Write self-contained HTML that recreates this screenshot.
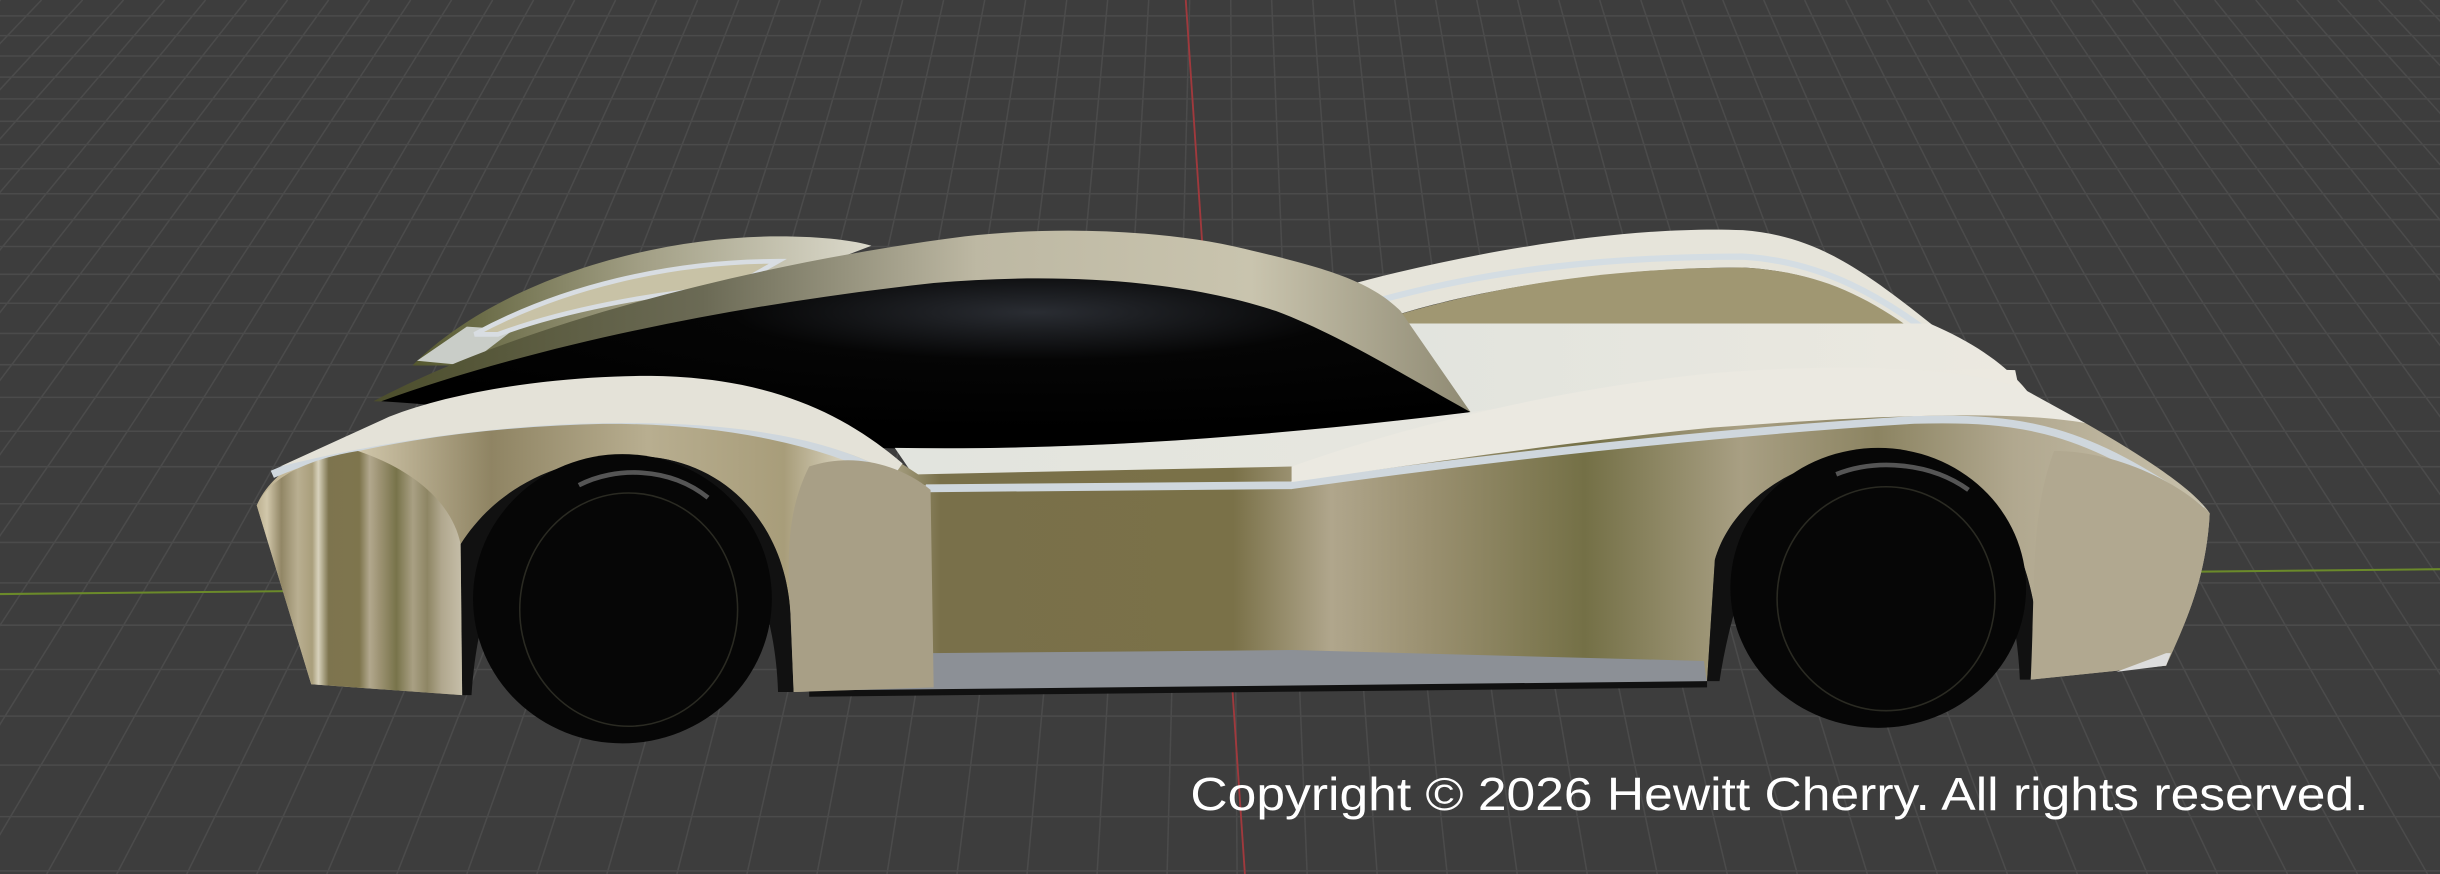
<!DOCTYPE html>
<html><head><meta charset="utf-8"><style>
html,body{margin:0;padding:0;background:#3c3c3c;overflow:hidden}
svg{display:block}
</style></head><body>
<svg id="s" width="2440" height="874" viewBox="0 0 1568 562" preserveAspectRatio="none" xmlns="http://www.w3.org/2000/svg">
<defs>
<linearGradient id="tan" x1="0" y1="0" x2="1" y2="0">
<stop offset="0" stop-color="#bdb191"/><stop offset="0.05" stop-color="#d2c8ac"/><stop offset="0.12" stop-color="#8f8463"/><stop offset="0.2" stop-color="#b8ae90"/><stop offset="0.27" stop-color="#a89d7a"/><stop offset="0.3" stop-color="#d8d2bd"/><stop offset="0.35" stop-color="#79704a"/><stop offset="0.5" stop-color="#7a7148"/><stop offset="0.55" stop-color="#b0a68c"/><stop offset="0.6" stop-color="#9a9070"/><stop offset="0.68" stop-color="#747046"/><stop offset="0.76" stop-color="#a89f83"/><stop offset="0.83" stop-color="#8c8462"/><stop offset="0.9" stop-color="#b1a88f"/><stop offset="1" stop-color="#c8c1ac"/>
</linearGradient>
<linearGradient id="canopy" x1="0" y1="0" x2="1" y2="0">
<stop offset="0" stop-color="#4c4e2c"/><stop offset="0.3" stop-color="#6b6a55"/><stop offset="0.55" stop-color="#bdb8a3"/><stop offset="0.8" stop-color="#c9c4ae"/><stop offset="1" stop-color="#8f8a73"/>
</linearGradient>
<linearGradient id="fin" x1="0" y1="0" x2="1" y2="0">
<stop offset="0" stop-color="#55582f"/><stop offset="0.5" stop-color="#a29f85"/><stop offset="1" stop-color="#dcdacc"/>
</linearGradient>
<linearGradient id="white" x1="0" y1="0" x2="1" y2="0">
<stop offset="0" stop-color="#e2e4de"/><stop offset="1" stop-color="#ece9e0"/>
</linearGradient>
<radialGradient id="glass" cx="0.6" cy="0.2" r="0.7">
<stop offset="0" stop-color="#2a2d33"/><stop offset="0.4" stop-color="#050505"/><stop offset="1" stop-color="#000"/>
</radialGradient>
</defs>
<rect width="1568" height="562" fill="#3d3d3d"/>
<g id="grid" stroke="#4b4b4b" stroke-width="1" fill="none"></g>
<line x1="0" y1="382" x2="1568" y2="366" stroke="#6b8a2a" stroke-width="1.3"/>
<line x1="762" y1="0" x2="800" y2="562" stroke="#a0393d" stroke-width="1.2"/>

<path d="M265,235 C320,180 420,152 500,152 C530,152 550,155 560,158 L450,200 C400,205 340,218 300,235 Z" fill="url(#fin)"/>
<path d="M268,232 L300,210 L330,212 L300,235 Z" fill="#c9cdc8"/>
<path d="M305,215 C360,185 430,168 500,168 L470,185 C420,188 360,200 320,215 Z" fill="#c8c2a6" stroke="#d8dde2" stroke-width="3"/>
<path d="M860,185 C950,160 1050,145 1120,148 C1170,152 1200,175 1258,222 L1230,222 C1200,190 1170,175 1120,172 C1040,172 950,185 890,205 Z" fill="#e6e4da"/>
<path d="M890,205 C960,183 1040,172 1120,172 C1170,175 1200,190 1240,220 L1240,222 L900,222 Z" fill="#a09772"/>
<path d="M880,195 C960,172 1040,165 1120,165 C1170,168 1210,190 1250,222" stroke="#d4dde3" stroke-width="4" fill="none"/>
<path d="M900,208 L1240,208 C1280,225 1300,245 1310,262 L1000,275 L945,268 Z" fill="url(#white)"/>
<path d="M240,258 C330,210 480,170 620,152 C680,145 750,148 800,160 C850,172 880,180 900,200 L945,265 L880,268 C700,275 500,265 240,258 Z" fill="url(#canopy)"/>
<path d="M245,258 C350,220 480,195 600,182 C680,175 760,180 820,200 C860,215 900,240 945,265 C800,285 650,290 560,288 C480,280 350,265 245,258 Z" fill="url(#glass)"/>
<path d="M575,288 C700,290 820,280 945,265 C1050,250 1200,235 1295,238 L1300,262 L830,305 L590,310 Z" fill="url(#white)"/>
<path d="M165,325 C180,290 240,270 330,262 C430,255 520,262 570,292 L590,305 L830,300 C950,280 1080,270 1200,262 C1280,258 1320,262 1340,272 C1380,295 1410,315 1420,330 C1418,370 1405,400 1395,420 L1392,428 L1305,437 L1308,395 C1300,340 1270,300 1230,292 C1170,285 1115,315 1102,360 L1097,438 L600,442 L510,445 L508,395 C505,340 470,300 420,294 C360,290 318,315 296,350 L297,447 L200,440 Z" fill="url(#tan)"/>
<path d="M598,420 L830,418 L1095,425 L1097,440 L520,445 Z" fill="#8c9096"/>
<path d="M520,444 L1097,438 L1097,442 L520,448 Z" fill="#111"/>
<path d="M175,305 C220,285 300,272 390,270 C470,270 530,285 570,305 L595,315" stroke="#cfd7dd" stroke-width="5" fill="none"/>
<path d="M595,314 L830,312 C950,295 1100,278 1230,270 C1300,268 1340,275 1415,328" stroke="#cfd7dd" stroke-width="5" fill="none"/>
<path d="M250,268 C300,248 380,240 430,242 C500,245 545,268 580,298 L575,305 C530,280 470,272 400,272 C320,272 240,285 180,300 Z" fill="#e4e2d8"/>
<path d="M830,300 C900,275 1000,250 1100,240 C1200,232 1270,238 1300,250 L1340,272 C1300,265 1230,265 1100,275 C1000,285 900,300 830,310 Z" fill="#ebe9e1"/>
<path d="M296,350 C318,315 360,290 420,294 C470,300 505,340 508,395 L510,445 L500,445 C498,380 470,320 420,310 C360,305 310,340 303,447 L297,447 Z" fill="#111"/>
<path d="M1102,360 C1115,315 1170,285 1230,292 C1270,300 1300,340 1308,395 L1305,437 L1298,437 C1295,360 1260,305 1220,302 C1160,300 1120,340 1105,438 L1097,438 Z" fill="#111"/>
<ellipse cx="400" cy="385" rx="96" ry="93" fill="#060606"/>
<ellipse cx="404" cy="392" rx="70" ry="75" fill="none" stroke="#2a2a22" stroke-width="1"/>
<ellipse cx="1207" cy="378" rx="95" ry="90" fill="#060606"/>
<ellipse cx="1212" cy="385" rx="70" ry="72" fill="none" stroke="#2a2a22" stroke-width="1"/>
<path d="M372,312 C395,300 430,300 455,320" stroke="#555" stroke-width="3" fill="none"/>
<path d="M1180,305 C1205,295 1240,297 1265,315" stroke="#555" stroke-width="3" fill="none"/>
<path d="M296,350 L297,447 L200,440 L165,325 C175,305 200,295 230,290 C260,300 290,320 296,350 Z" fill="url(#tan)" opacity="0.95"/>
<path d="M508,395 L510,445 L600,442 L598,315 C580,300 550,290 520,300 C505,330 506,360 508,395 Z" fill="#a89f86"/>
<path d="M1305,437 L1392,428 C1405,400 1418,370 1420,330 C1400,310 1360,290 1320,290 C1305,330 1308,370 1305,437 Z" fill="#b1a890"/>
<path d="M1392,420 L1395,420 L1392,428 L1360,432 Z" fill="#ddd"/>
<text x="765" y="521" textLength="757" lengthAdjust="spacingAndGlyphs" font-family="Liberation Sans, sans-serif" font-size="30" fill="#ffffff">Copyright © 2026 Hewitt Cherry. All rights reserved.</text>
</svg>
<script>
var g=document.getElementById('grid'),H=-794,k=52536,s='';
var y=560;while(y>0){s+='<line x1="0" y1="'+y.toFixed(1)+'" x2="1568" y2="'+y.toFixed(1)+'"/>';y-=(y-H)*(y-H)/k;}
var vx=785;for(var i=-80;i<=80;i++){var xb=vx+i*45+10;var t=(0-H)/(562-H);var xt=vx+(xb-vx)*t;s+='<line x1="'+xb+'" y1="562" x2="'+xt.toFixed(1)+'" y2="0"/>';}
g.innerHTML=s;
</script>
</body></html>
